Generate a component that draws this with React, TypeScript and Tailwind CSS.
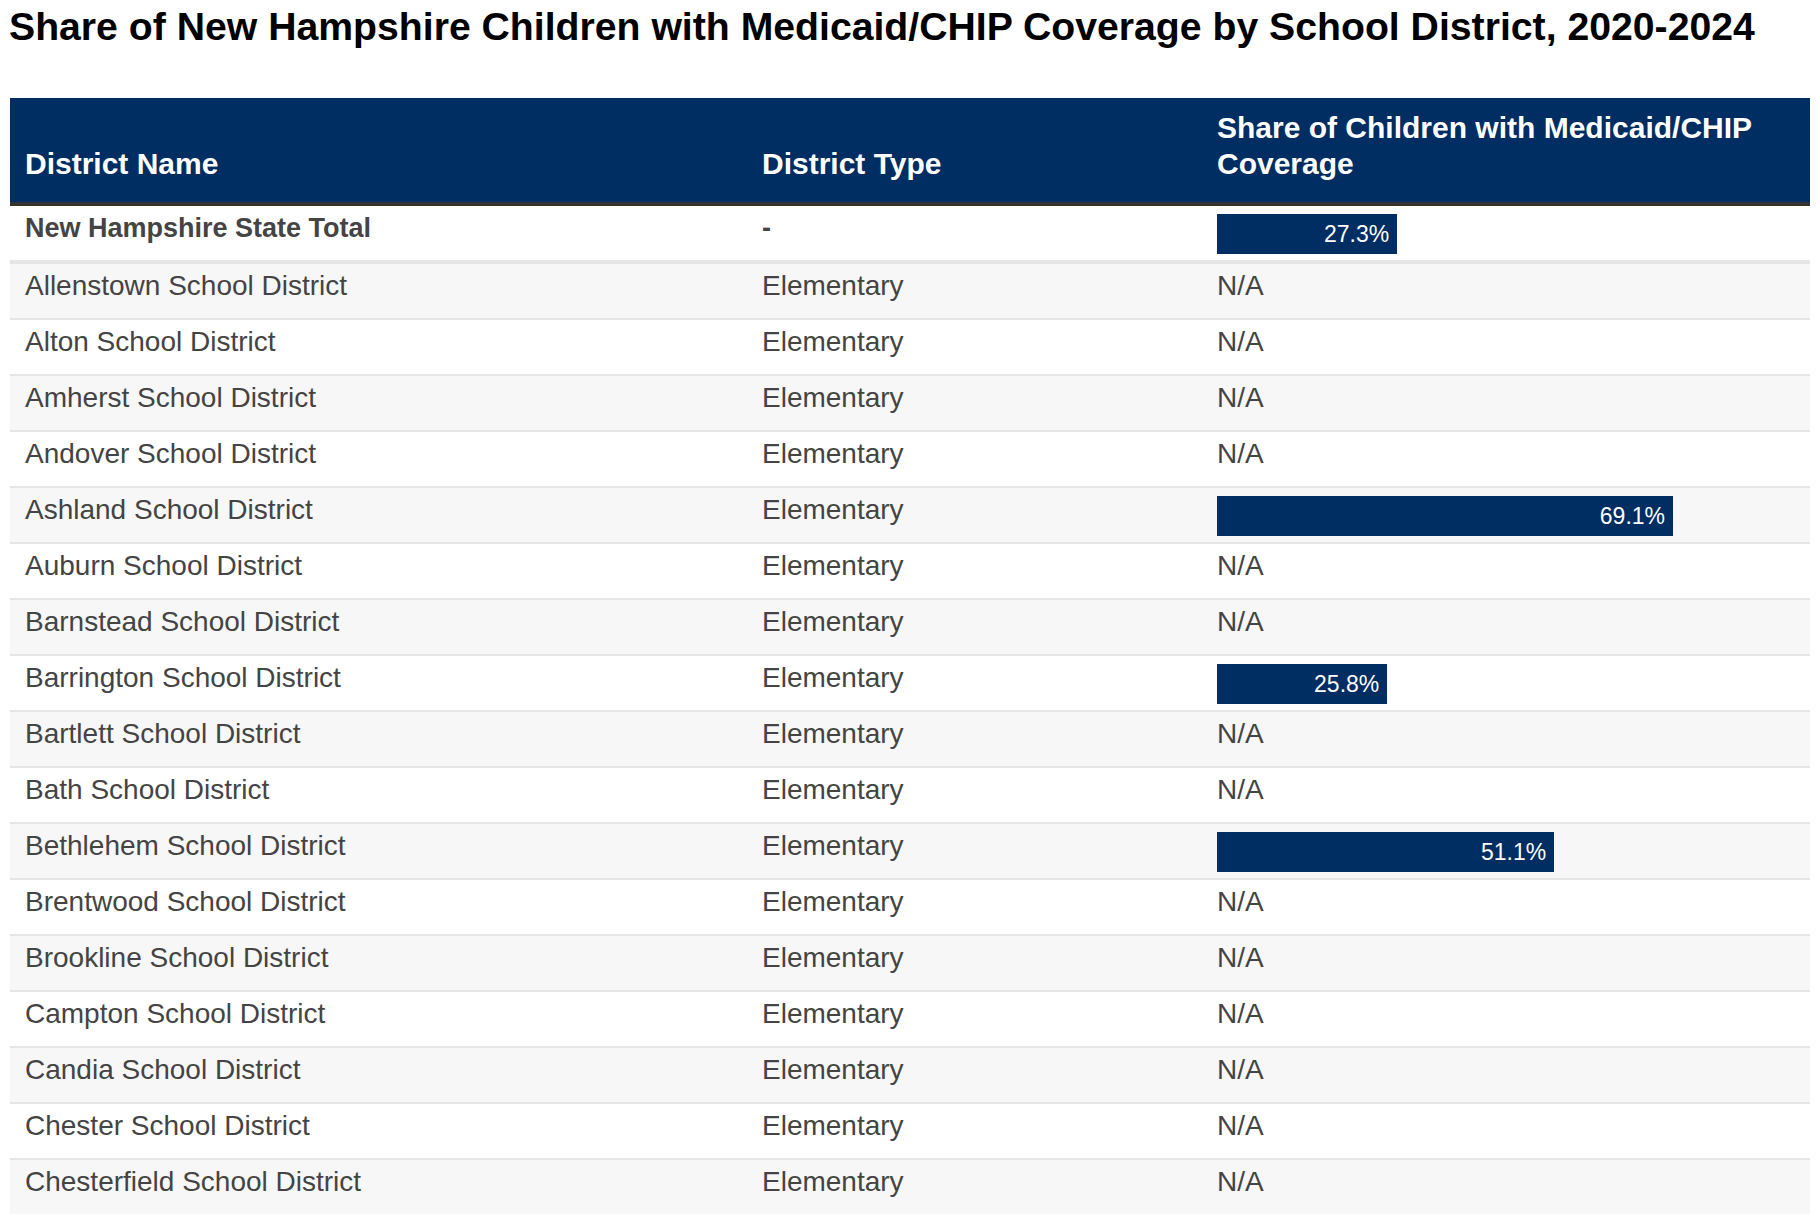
const rows: { name: string; type: string; share: number | null }[] = [
  { name: "Allenstown School District", type: "Elementary", share: null },
  { name: "Alton School District", type: "Elementary", share: null },
  { name: "Amherst School District", type: "Elementary", share: null },
  { name: "Andover School District", type: "Elementary", share: null },
  { name: "Ashland School District", type: "Elementary", share: 69.1 },
  { name: "Auburn School District", type: "Elementary", share: null },
  { name: "Barnstead School District", type: "Elementary", share: null },
  { name: "Barrington School District", type: "Elementary", share: 25.8 },
  { name: "Bartlett School District", type: "Elementary", share: null },
  { name: "Bath School District", type: "Elementary", share: null },
  { name: "Bethlehem School District", type: "Elementary", share: 51.1 },
  { name: "Brentwood School District", type: "Elementary", share: null },
  { name: "Brookline School District", type: "Elementary", share: null },
  { name: "Campton School District", type: "Elementary", share: null },
  { name: "Candia School District", type: "Elementary", share: null },
  { name: "Chester School District", type: "Elementary", share: null },
  { name: "Chesterfield School District", type: "Elementary", share: null },
];

const Bar = ({ value }: { value: number }) => (
  <div
    className="mt-[8px] h-[40px] bg-[#002d62] text-white text-[23px] leading-[40px] text-right pr-[8px]"
    style={{ width: `${value * 6.6}px` }}
  >
    {value.toFixed(1)}%
  </div>
);

export default function App() {
  return (
    <div className="w-[1820px] h-[1220px] overflow-hidden bg-white px-[10px] font-['Liberation_Sans',Arial,sans-serif]">
      <h1 className="pt-[3px] text-[39.2px] leading-[47px] font-bold text-black mb-[48px] -ml-[1px]">
        Share of New Hampshire Children with Medicaid/CHIP Coverage by School District, 2020-2024
      </h1>

      <div className="grid grid-cols-[735px_455px_1fr] items-end bg-[#002d62] text-white text-[30px] leading-[36px] font-bold pt-[12px] pb-[20px] border-b-4 border-[#333]">
        <div className="pl-[15px] pr-[17px]">District Name</div>
        <div className="px-[17px]">District Type</div>
        <div className="px-[17px]">
          Share of Children with Medicaid/CHIP
          <br />
          Coverage
        </div>
      </div>

      <div className="grid grid-cols-[735px_455px_1fr] h-[58px] bg-white text-[#444] border-b-4 border-[#e6e6e6]">
        <div className="pl-[15px] pr-[17px] pt-[8px] text-[27px] leading-[28px] font-bold">New Hampshire State Total</div>
        <div className="px-[17px] pt-[8px] text-[27px] leading-[28px] font-bold">-</div>
        <div className="px-[17px]">
          <Bar value={27.3} />
        </div>
      </div>

      {rows.map((r, i) => (
        <div
          key={r.name}
          className={`grid grid-cols-[735px_455px_1fr] text-[#444] text-[28px] leading-[28px] ${
            i > 0 ? "h-[56px] border-t-2 border-[#e6e6e6]" : "h-[54px]"
          } ${i % 2 === 0 ? "bg-[#f7f7f7]" : "bg-white"}`}
        >
          <div className="pl-[15px] pr-[17px] pt-[8px]">{r.name}</div>
          <div className="px-[17px] pt-[8px]">{r.type}</div>
          <div className="px-[17px]">
            {r.share === null ? <div className="pt-[8px]">N/A</div> : <Bar value={r.share} />}
          </div>
        </div>
      ))}
    </div>
  );
}
